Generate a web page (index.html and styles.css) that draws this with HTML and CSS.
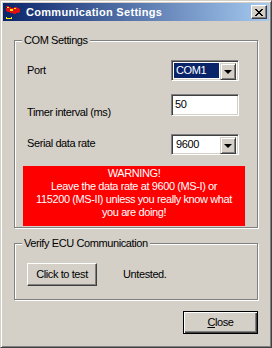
FILE: index.html
```html
<!DOCTYPE html>
<html>
<head>
<meta charset="utf-8">
<link rel="stylesheet" href="styles.css">
</head>
<body>
<div class="window">
  <div class="titlebar">
    <svg class="app-icon" width="16" height="16" viewBox="0 0 16 16" shape-rendering="crispEdges">
      <path d="M1 2h3v1h2v1h3v-1h3v1h2v1h1v3h-1v1h-3v1h-3v-1h-3v-1h-3v-1h-1v-3h1z" fill="#e01010"/>
      <path d="M2 3h2v1h-2z M5 5h3v2h-3z M9 4h2v1h-2z" fill="#ffee00"/>
      <path d="M1 13h1v1h4v-1h1v2h-6z" fill="#ffee00"/>
    </svg>
    <span class="title">Communication Settings</span>
    <button class="tb-close" type="button" aria-label="Close">
      <svg width="8" height="7" viewBox="0 0 8 7" shape-rendering="crispEdges">
        <path d="M0 0h2v1h1v1h2v-1h1v-1h2v1h-1v1h-1v1h-1v1h1v1h1v1h1v1h-2v-1h-1v-1h-2v1h-1v1h-2v-1h1v-1h1v-1h1v-1h-1v-1h-1v-1h-1z" fill="#000"/>
      </svg>
    </button>
  </div>
  <div class="client">
    <div class="group group-com">
      <span class="legend">COM Settings</span>
      <div class="row row-port">
        <span class="lbl">Port</span>
        <div class="combo">
          <span class="combo-text selected">COM1</span>
          <span class="combo-btn"><span class="arrow"></span></span>
        </div>
      </div>
      <div class="row row-timer">
        <span class="lbl">Timer interval (ms)</span>
        <div class="textbox">50</div>
      </div>
      <div class="row row-rate">
        <span class="lbl">Serial data rate</span>
        <div class="combo">
          <span class="combo-text">9600</span>
          <span class="combo-btn"><span class="arrow"></span></span>
        </div>
      </div>
      <div class="warning">WARNING!<br>Leave the data rate at 9600 (MS-I) or<br>115200 (MS-II) unless you really know what<br>you are doing!</div>
    </div>
    <div class="group group-verify">
      <span class="legend">Verify ECU Communication</span>
      <div class="verify-row">
        <button class="btn btn-test" type="button">Click to test</button>
        <span class="status">Untested.</span>
      </div>
    </div>
    <div class="footer">
      <button class="btn btn-default" type="button"><u>C</u>lose</button>
    </div>
  </div>
</div>
</body>
</html>
```

FILE: styles.css
```css
* { box-sizing: border-box; }
html, body { margin: 0; padding: 0; background: #d4d0c8; }
body {
  font-family: "Liberation Sans", Arial, sans-serif;
  font-size: 11px;
  line-height: 13px;
  letter-spacing: -0.4px;
  color: #000;
}
.window {
  width: 272px;
  height: 348px;
  background: #d4d0c8;
  border: 1px solid;
  border-color: #d4d0c8 #404040 #404040 #d4d0c8;
  box-shadow: inset 1px 1px 0 #ffffff, inset -1px -1px 0 #808080;
  padding: 2px;
  display: flex;
  flex-direction: column;
}
.titlebar {
  height: 18px;
  background: linear-gradient(to right, #0a246a, #a6caf0);
  display: flex;
  align-items: center;
  padding: 0 2px 0 2px;
  flex-shrink: 0;
}
.app-icon { display: block; flex-shrink: 0; }
.title {
  color: #fff;
  font-weight: bold;
  font-size: 11px;
  letter-spacing: 0.3px;
  margin-left: 5px;
  flex: 1;
  white-space: nowrap;
}
.tb-close {
  width: 16px;
  height: 14px;
  padding: 0;
  margin: 0;
  background: #d4d0c8;
  border: 1px solid;
  border-color: #ffffff #404040 #404040 #ffffff;
  box-shadow: inset -1px -1px 0 #808080;
  display: flex;
  align-items: center;
  justify-content: center;
}
.tb-close svg { display: block; }
.client {
  flex: 1;
  display: flex;
  flex-direction: column;
  padding: 0 0 0 11px;
}
.group {
  position: relative;
  width: 244px;
  border: 1px solid #808080;
  box-shadow: inset 1px 1px 0 #ffffff, 1px 1px 0 #ffffff;
}
.legend {
  position: absolute;
  top: -7px;
  left: 7px;
  padding: 0 2px;
  background: #d4d0c8;
  white-space: nowrap;
}
.group-com {
  margin-top: 19px;
  height: 188px;
  padding: 19px 0 0 12px;
}
.row { display: flex; align-items: flex-start; }
.lbl { width: 144px; flex-shrink: 0; white-space: nowrap; }
.row-port .lbl { margin-top: 4px; }
.row-timer { margin-top: 13px; }
.row-timer .lbl { margin-top: 12px; }
.row-rate { margin-top: 15px; }
.row-rate .lbl { margin-top: 3px; }
.combo, .textbox {
  width: 68px;
  background: #fff;
  border: 1px solid;
  border-color: #808080 #ffffff #ffffff #808080;
  box-shadow: inset 1px 1px 0 #404040, inset -1px -1px 0 #d4d0c8;
}
.combo {
  height: 21px;
  display: flex;
  padding: 2px;
}
.combo-text {
  flex: 1;
  padding: 1px 0 0 2px;
  margin: 0 1px 0 0;
}
.combo-text.selected { background: #0a246a; color: #fff; }
.combo-btn {
  width: 16px;
  height: 17px;
  background: #d4d0c8;
  border: 1px solid;
  border-color: #d4d0c8 #404040 #404040 #d4d0c8;
  box-shadow: inset 1px 1px 0 #ffffff, inset -1px -1px 0 #808080;
  display: flex;
  align-items: center;
  justify-content: center;
}
.arrow {
  width: 0;
  height: 0;
  border-left: 4px solid transparent;
  border-right: 4px solid transparent;
  border-top: 4px solid #000;
  margin-top: 1px;
}
.textbox {
  height: 22px;
  padding: 3px 0 0 3px;
}
.warning {
  margin: 11px 0 0 -4px;
  width: 222px;
  height: 60px;
  background: #ff0000;
  color: #fff;
  text-align: center;
  padding-top: 1px;
  white-space: nowrap;
}
.group-verify {
  margin-top: 15px;
  height: 57px;
  padding: 19px 0 0 12px;
}
.verify-row { display: flex; align-items: center; }
.btn {
  font-family: inherit;
  font-size: 11px;
  line-height: 13px;
  letter-spacing: -0.4px;
  color: #000;
  background: #d4d0c8;
  margin: 0;
  padding: 0;
  border: 1px solid;
  border-color: #ffffff #404040 #404040 #ffffff;
  box-shadow: inset -1px -1px 0 #808080;
}
.btn-test { width: 70px; height: 23px; }
.status { margin-left: 26px; }
.footer {
  margin-top: 11px;
  padding-left: 169px;
}
.btn-default {
  width: 75px;
  height: 23px;
  border: 1px solid #000;
  box-shadow: inset 1px 1px 0 #ffffff, inset -1px -1px 0 #404040, inset -2px -2px 0 #808080;
}
```
